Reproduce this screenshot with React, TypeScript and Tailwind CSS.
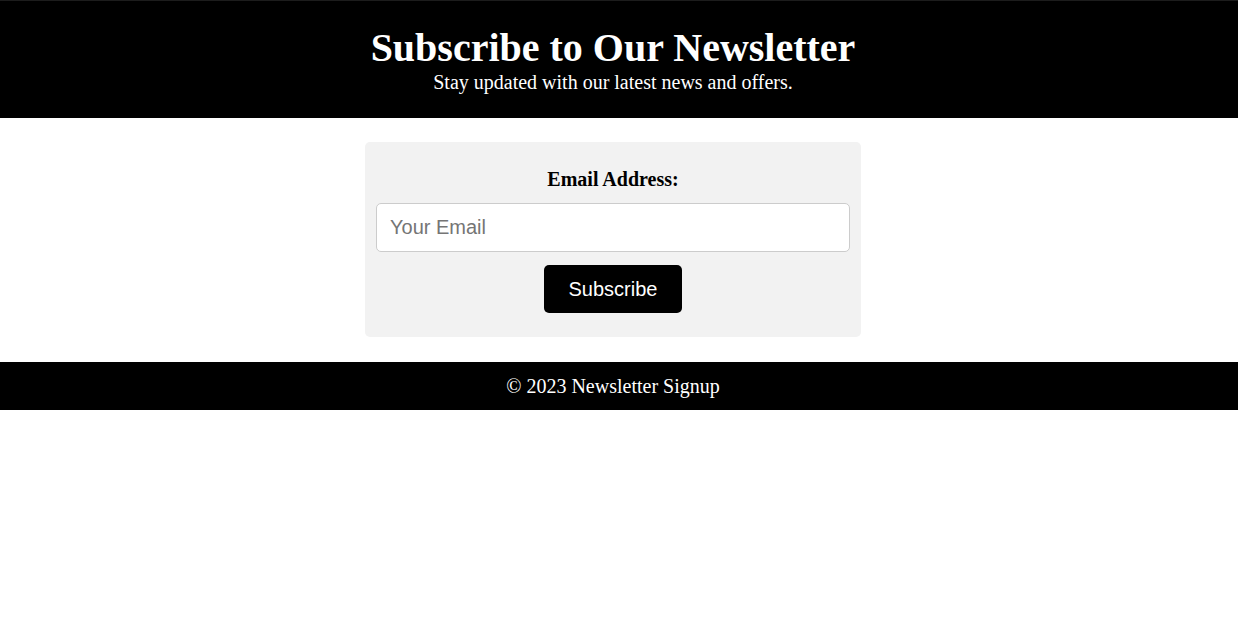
export default function App() {
  return (
    <div className="min-h-screen bg-white font-['Liberation_Serif',serif]">
      {/* Header */}
      <header className="border-t border-[#1c1c1c] bg-black text-center text-white h-[118px] pt-[24px] pr-[12px]">
        <h1 className="text-[40px] font-bold leading-[46px]">Subscribe to Our Newsletter</h1>
        <p className="text-[20px] leading-[23px]">Stay updated with our latest news and offers.</p>
      </header>

      {/* Signup card */}
      <main className="flex justify-center pt-[24px] pb-[25px] pr-[12px]">
        <form className="w-[496px] h-[195px] rounded-[5px] bg-[#f2f2f2] px-[11px] pt-[26px] flex flex-col items-center">
          <label htmlFor="email" className="text-[20px] font-bold leading-[23px]">Email Address:</label>
          <input
            id="email"
            type="email"
            placeholder="Your Email"
            className="mt-[12px] w-full h-[49px] rounded-[5px] border border-[#cccccc] bg-white px-[13px] font-['Liberation_Sans',sans-serif] text-[20px] text-black placeholder:text-[#757575] outline-none"
          />
          <button
            type="button"
            className="mt-[13px] w-[138px] h-[48px] rounded-[5px] bg-black font-['Liberation_Sans',sans-serif] text-[20px] text-white"
          >
            Subscribe
          </button>
        </form>
      </main>

      {/* Footer */}
      <footer className="h-[48px] bg-black flex items-center justify-center pr-[12px] text-white text-[20px]">
        © 2023 Newsletter Signup
      </footer>
    </div>
  );
}
